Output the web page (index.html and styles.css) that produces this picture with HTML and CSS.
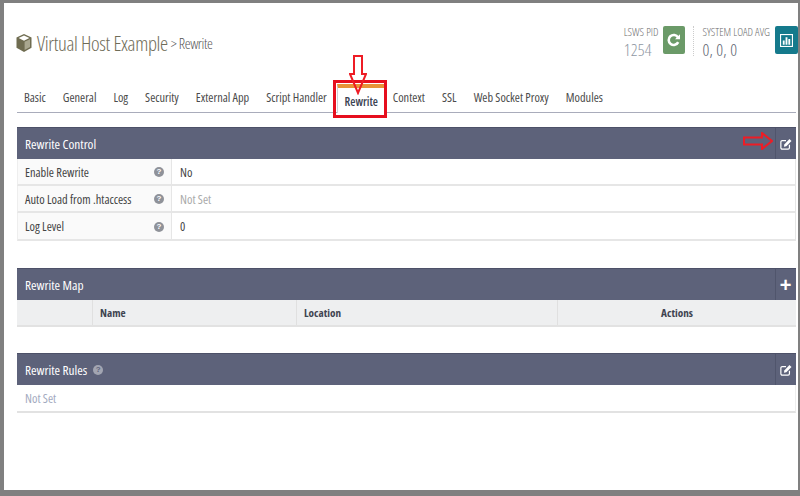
FILE: index.html
```html
<!DOCTYPE html>
<html lang="en">
<head>
<meta charset="utf-8">
<title>Rewrite</title>
<link rel="stylesheet" href="styles.css">
</head>
<body>
<main class="page">
  <header class="top">
    <h1 class="title">
      <svg class="cube" viewBox="0 0 16 18" width="16" height="18"><path fill="#6f6c50" d="M8 0l7.5 3.6v10.2L8 18 .5 13.8V3.6z"/><path fill="#fff" d="M8 1.600l5.400 2.500L8 6.700 2.600 4.100z"/><path fill="#a9a78f" d="M8.600 7.800l5.400-2.600v7.800l-5.400 3z"/></svg>
      <span class="host">Virtual Host Example</span>
      <span class="crumb">&gt; Rewrite</span>
    </h1>
    <div class="stats">
      <div class="stat">
        <div class="stat-label">LSWS PID</div>
        <div class="stat-value pid">1254</div>
      </div>
      <button class="square green"><svg viewBox="0 0 14 14" width="14" height="14"><path fill="none" stroke="#fff" stroke-width="2.6" d="M11.200 9.200A5 5 0 1 1 11 4.400"/><path fill="#fff" d="M13 1.200v5H8z"/></svg></button>
      <div class="sep"></div>
      <div class="stat">
        <div class="stat-label">SYSTEM LOAD AVG</div>
        <div class="stat-value">0, 0, 0</div>
      </div>
      <button class="square teal"><svg viewBox="0 0 14 14" width="13" height="13"><rect x=".6" y=".6" width="12.8" height="12.8" fill="none" stroke="#fff" stroke-width="1.2"/><path fill="#fff" d="M3 7h2v4.500H3zM6 3.500h2v8H6zM9 5.500h2v6H9z"/></svg></button>
    </div>
  </header>
  <nav class="tabs">
    <a class="tab">Basic</a><a class="tab">General</a><a class="tab">Log</a><a class="tab">Security</a><a class="tab">External App</a><a class="tab">Script Handler</a><a class="tab active">Rewrite</a><a class="tab">Context</a><a class="tab">SSL</a><a class="tab">Web Socket Proxy</a><a class="tab">Modules</a>
  </nav>

  <section class="panel first">
    <div class="panel-head">
      <span class="panel-title">Rewrite Control</span>
      <button class="head-btn"><svg viewBox="0 0 14 14" width="12" height="12"><path fill="none" stroke="#fff" stroke-width="1.4" d="M11 8v3.400a1.600 1.600 0 0 1-1.600 1.600H2.600A1.600 1.600 0 0 1 1 11.400V4.600A1.600 1.600 0 0 1 2.600 3H7"/><path fill="#fff" d="M5 7.500L11 1.200 13.400 3.400 7.400 9.600 4.600 10.200z"/></svg></button>
    </div>
    <div class="row">
      <div class="label"><span>Enable Rewrite</span><i class="help">?</i></div>
      <div class="value">No</div>
    </div>
    <div class="row">
      <div class="label"><span>Auto Load from .htaccess</span><i class="help">?</i></div>
      <div class="value muted">Not Set</div>
    </div>
    <div class="row">
      <div class="label"><span>Log Level</span><i class="help">?</i></div>
      <div class="value">0</div>
    </div>
  </section>

  <section class="panel second">
    <div class="panel-head">
      <span class="panel-title">Rewrite Map</span>
      <button class="head-btn plus">+</button>
    </div>
    <div class="table-head">
      <div class="th"></div>
      <div class="th">Name</div>
      <div class="th">Location</div>
      <div class="th center">Actions</div>
    </div>
  </section>

  <section class="panel third">
    <div class="panel-head">
      <span class="panel-title">Rewrite Rules</span><i class="help on-dark">?</i>
      <button class="head-btn"><svg viewBox="0 0 14 14" width="12" height="12"><path fill="none" stroke="#fff" stroke-width="1.4" d="M11 8v3.400a1.600 1.600 0 0 1-1.600 1.600H2.600A1.600 1.600 0 0 1 1 11.400V4.600A1.600 1.600 0 0 1 2.600 3H7"/><path fill="#fff" d="M5 7.500L11 1.200 13.400 3.400 7.400 9.600 4.600 10.200z"/></svg></button>
    </div>
    <div class="empty">Not Set</div>
  </section>
</main>

<div class="mark-box"></div>
<svg class="arrow-down" viewBox="0 0 18 40" width="18" height="40"><path fill="none" stroke="#ee1c25" stroke-width="2" d="M5 1h8v18h4L9 38 1 19h4z"/></svg>
<svg class="arrow-right" viewBox="0 0 30 18" width="30" height="18"><path fill="none" stroke="#ee1c25" stroke-width="2" d="M1 5.500h18V1l10 8-10 8v-4.500H1z"/></svg>
</body>
</html>
```
FILE: styles.css
```css
* { box-sizing: border-box; }
html, body { margin: 0; height: 100%; }
body {
  background: #fff;
  border-style: solid;
  border-color: #808080;
  border-width: 3px 2px 6px 4px;
  width: 800px;
  height: 496px;
  overflow: hidden;
  position: relative;
  font-family: "Open Sans", "Liberation Sans", sans-serif;
  font-stretch: 75%;
  font-size: 12.4px;
  color: #333;
}
.page { padding: 0 2px 0 13px; }
.top {
  display: flex;
  justify-content: space-between;
  height: 73px;
  padding-top: 22px;
}
.title {
  margin: 7px 0 0;
  display: flex;
  align-items: center;
  height: 22px;
  font-weight: 400;
}
.cube { margin: 0 5px 0 -1px; }
.host { font-size: 20.6px; font-weight: 300; color: #6f6c58; letter-spacing: -.35px; }
.crumb { font-size: 14.8px; color: #555; margin-left: 3px; letter-spacing: -.4px; font-weight: 300; }
.stats { display: flex; align-items: flex-start; margin: 1px -2px 0 0; }
.stat { margin-right: 5px; }
.stat-label { font-size: 11.2px; line-height: 11px; color: #6d6d6d; font-weight: 300; }
.stat-value { font-size: 16.8px; line-height: 24px; margin-top: 1px; letter-spacing: .2px; color: #5e6470; font-weight: 300; }
.stat-value.pid { color: #8f98a3; }
.square {
  width: 22px;
  height: 28px;
  border: 0;
  padding: 0;
  border-radius: 2px;
  display: flex;
  align-items: center;
  justify-content: center;
}
.green { background: #6b9a68; }
.teal { background: #157a8c; width: 23px; }
.sep { width: 0; height: 30px; border-left: 1px dotted #ccc; margin: 0 8px; }
.tabs {
  display: flex;
  align-items: flex-end;
  height: 32px;
  margin-top: 5px;
  border-bottom: 1px solid #a9acbb;
  padding-left: 7px;
}
.tab { font-size: 12.3px; line-height: 14px; padding-bottom: 7px; color: #4b4b4b; margin-right: 17px; white-space: nowrap; }
.tab.active {
  height: 29px;
  margin: 0 7px -1px -7px;
  width: 49px;
  flex: none;
  text-align: center;
  background: #fff;
  border: 1px solid #cfd0d8;
  border-bottom: 0;
  border-top: 4px solid #e89338;
  padding-top: 6px;
  font-size: 11.8px;
  font-weight: 600;
  color: #3a4252;
}
.first { margin-top: 14px; }
.second { margin-top: 27px; }
.third { margin-top: 26px; }
.panel-head {
  height: 32px;
  background: #5d627a;
  display: flex;
  align-items: center;
  padding-left: 8px;
  color: #fff;
  border-top: 1px solid #4d5168;
}
.panel-title { font-size: 13.3px; }
.head-btn {
  margin-left: auto;
  width: 21px;
  height: 100%;
  background: none;
  border: 0;
  border-left: 1px solid #50556c;
  padding: 0 1px 0 0;
  color: #fff;
  display: flex;
  align-items: center;
  justify-content: center;
}
.plus { font-size: 20px; font-weight: 700; line-height: 1; }
.row {
  display: flex;
  flex: none;
  height: 27px;
  border-bottom: 2px solid #e6e6e6;
  border-left: 1px solid #eee;
  border-right: 1px solid #e6e6e6;
}
.row:last-child { height: 28px; }
.label {
  width: 154px;
  flex: none;
  background: #fafafa;
  border-right: 1px solid #e6e6e6;
  display: flex;
  align-items: center;
  justify-content: space-between;
  padding: 1px 7px 0;
  color: #444;
}
.value { padding: 1px 0 0 8px; display: flex; align-items: center; color: #444; }
.muted { color: #aaa; }
.help {
  width: 10px;
  height: 10px;
  border-radius: 50%;
  background: #8f9299;
  color: #fff;
  font: 700 8px/10px "Liberation Sans", sans-serif;
  text-align: center;
}
.on-dark { margin-left: 6px; background: #a2a5b2; color: #5d627a; }
.table-head {
  display: grid;
  grid-template-columns: 76px 204px 261px 1fr;
  height: 27px;
  background: #eeeff0;
  border-bottom: 2px solid #e2e2e2;
}
.th {
  display: flex;
  align-items: center;
  padding-left: 7px;
  font-size: 11.2px;
  font-weight: 700;
  color: #3f4450;
  border-right: 1px solid #e0e0e0;
}
.center { justify-content: center; border-right: 0; padding-left: 0; }
.empty {
  height: 28px;
  display: flex;
  align-items: center;
  padding-left: 8px;
  color: #a3aac0;
  border-bottom: 2px solid #e2e2e2;
  border-right: 1px solid #eee;
}
.mark-box {
  position: absolute;
  left: 329px;
  top: 77px;
  width: 54px;
  height: 38px;
  border: 3px solid #e60f1e;
}
.arrow-down { position: absolute; left: 345px; top: 52px; }
.arrow-right { position: absolute; left: 739px; top: 129px; }
```
